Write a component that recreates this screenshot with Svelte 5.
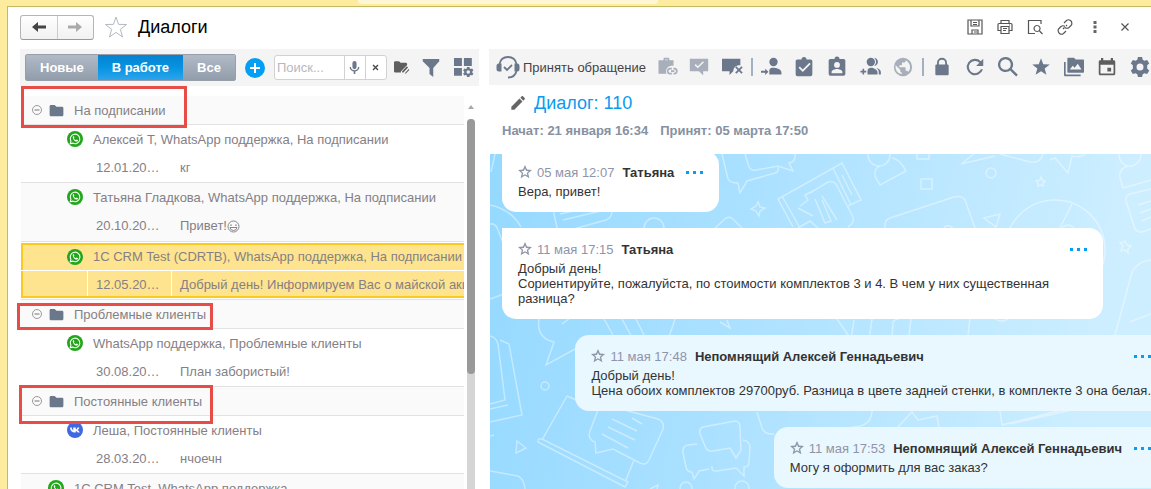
<script lang="ts">
  // filled shapes, 24x24 grid
  const icons: Record<string, string> = {
    caseLink:
      "M9 4V2.500C9 1.700 9.700 1 10.500 1h4c.8 0 1.500.7 1.500 1.500V4h5v6.500h-1c-4.500 0-7.500 2-8 6.500-.1 1.500.1 2.500.6 3H3V4h6zm2 0h3V3h-3v1zM17 13h2v2h-2c-2.600 0-2.600 4 0 4h2v2h-2c-5.400 0-5.400-8 0-8zm4 0h1c5.400 0 5.400 8 0 8h-1v-2h1c2.600 0 2.600-4 0-4h-1v-2zm-3 3h4v2h-4v-2z",
    bubbleCheck:
      "M1 2h22v15h-6v5l-5-5H1V2zm9.500 11.500l7.500-7.300L16.700 5l-6.200 6L8 8.500 6.700 9.800l3.800 3.700z",
    bubbleX:
      "M0 2h22v8c-5 0-8 2-8.500 7L9 21.500V17H0V2zm16 10.300l1.300-1.300 3 3 3-3 1.500 1.500-3 3 3 3-1.500 1.500-3-3-3 3-1.500-1.500 3-3-3-3z",
    personArrow:
      "M15 1a5 5 0 1 1 0 10 5 5 0 0 1 0-10zM10 21v-4.500c0-3 2.500-3.500 5-3.500s9 1.500 9.500 5v3H10zM0 16.500h5V14l4 3.800L5 21.500V19H0v-2.500z",
    clipboard:
      "M4 3h5a3 3 0 0 1 6 0h5c1 0 2 1 2 2v16c0 1-1 2-2 2H4c-1 0-2-1-2-2V5c0-1 1-2 2-2zm6.500 15L20 8.500 18.500 7l-8 8L7 11.500 5.500 13l5 5z",
    badge:
      "M4 2.500h5a3 3 0 0 1 6 0h5c1 0 2 1 2 2v16c0 1-1 2-2 2H4c-1 0-2-1-2-2v-16c0-1 1-2 2-2zM12 6a3.500 3.500 0 1 0 0 7 3.500 3.500 0 0 0 0-7zM5.500 19.500h13V18c0-2.500-4-3.700-6.500-3.700S5.500 15.500 5.500 18v1.500z",
    people:
      "M13 1a5 5 0 1 1 0 10 5 5 0 0 1 0-10zM17 1c6 1 6 9 0 10 3-3 3-7 0-10zM9 21v-4c0-3 2-4 4.500-4s7 2 7.500 5v3H9zM19 13c4 1 6 3 6 5v3h-2.500v-3c0-2-1.500-3.800-3.500-5zM3 14h2v2.500h2.500v2H5V21H3v-2.500H.5v-2H3V14z",
    globe:
      "M12 1a11 11 0 1 0 0 22 11 11 0 0 0 0-22zm-1.500 19.800A9 9 0 0 1 3.200 10l5.500 5.400v1c0 1.300.8 2.200 1.800 2.200v2.200zm7.700-2.700c-.3-.9-1.100-1.500-2.100-1.500h-1v-3.300c0-.6-.5-1.100-1.200-1.100H7.600V10h2.200c.6 0 1-.5 1-1.100V6.700H13c1.200 0 2.200-1 2.200-2.200V4a9 9 0 0 1 3 14.100z",
    lock: "M18.500 9H18V7a6 6 0 0 0-12 0v2h-.5C4.500 9 4 9.600 4 10.500v10c0 1 .5 1.500 1.500 1.500h13c1 0 1.500-.6 1.500-1.500v-10C20 9.600 19.500 9 18.500 9zM8.200 9V7a3.800 3.800 0 0 1 7.600 0v2H8.200z",
    refresh:
      "M19.800 4.200A11 11 0 1 0 22.600 15h-2.900a8.200 8.200 0 1 1-1.900-8.800L13.500 10.500H23V1l-3.200 3.200z",
    search:
      "M9 0a9 9 0 1 0 5.500 16.100l7.300 7.300 2-2-7.300-7.300A9 9 0 0 0 9 0zm0 2.700a6.300 6.300 0 1 1 0 12.600A6.300 6.300 0 0 1 9 2.700z",
    star: "M12 1.500l2.700 7.200 7.800.3-6.100 4.800 2.100 7.500L12 17l-6.500 4.300 2.100-7.500L1.500 9l7.800-.3L12 1.500z",
    media:
      "M0 6h2v15h18v2H1c-.6 0-1-.4-1-1V6zM6 1h6l2 2h9c.6 0 1 .4 1 1v14c0 .6-.4 1-1 1H5c-.6 0-1-.4-1-1V2c0-.6.400-1 1-1h1zm1 14h14l-4.500-7-3.700 5-2.300-2.500L7 15z",
    calendar:
      "M4 0h3v3h10V0h3v3h1c1.200 0 2 .8 2 2v16c0 1.200-.8 2-2 2H3c-1.200 0-2-.8-2-2V5c0-1.200.8-2 2-2h1V0zM3.300 9v11.700h17.400V9H3.300zM12.500 13h5v5h-5v-5z",
    gear: "M9.500 0h5l.7 3.300 2.200 1.200 3.200-1 2.500 4.200-2.500 2.300v3.900l2.500 2.300-2.500 4.300-3.200-1-2.200 1.200-.7 3.300h-5l-.7-3.300-2.200-1.200-3.200 1-2.500-4.300L3.400 14V10L.9 7.700l2.500-4.200 3.200 1 2.200-1.200L9.500 0zM12 7.800a4.200 4.200 0 1 0 0 8.400 4.200 4.200 0 0 0 0-8.400z",
    pencil: "M2 17.500V22h4.500L18.700 9.800l-4.500-4.500L2 17.500zM22 6.400c.6-.6.6-1.300 0-1.900L19.500 2c-.6-.6-1.300-.6-1.900 0l-2.100 2.100 4.500 4.400L22 6.400z",
    folder: "M1 5c0-1 1-2 2-2h6l3 3h9c1 0 2 1 2 2v11c0 1-1 2-2 2H3c-1 0-2-1-2-2V5z",
    folderEdit:
      "M0 4c0-1 .7-2 2-2h6l2.500 2.500H19c1 0 2 1 2 2V8L11 18.500V20H2c-1 0-2-1-2-2V4zM13 18l7.500-8 2 2-7.500 8h-2v-2zM17 21.500l6.500-7 1 1.300-5.500 5.700h-2z",
    funnel: "M1 0h22v3l-8 9v12l-5-4v-8L1 3V0z",
    mic: "M12 0a3.800 3.800 0 0 1 3.800 3.800v7.400a3.800 3.800 0 0 1-7.600 0V3.800A3.800 3.800 0 0 1 12 0zM3 11h2.500c0 8 13 8 13 0H21c0 4.500-3.300 7.700-7.500 8.400V24h-3v-4.600C6.300 18.700 3 15.500 3 11z",
    tiles:
      "M0 0h10v10H0V0zm12.500 0h10v10h-10V0zM0 12.500h10v10H0v-10zM16.500 11.500h3l.4 1.800 1.400.7 1.700-.7 1.500 2.500-1.400 1.200v1.500l1.400 1.200-1.500 2.500-1.700-.7-1.400.7-.4 1.800h-3l-.4-1.800-1.400-.7-1.700.7-1.500-2.500 1.400-1.200V17l-1.400-1.200 1.500-2.500 1.700.7 1.400-.7.400-1.800zM18 15.500a2.200 2.200 0 1 0 0 4.500 2.200 2.200 0 0 0 0-4.500z",
    starOutline:
      "M12 0l3.400 7.800 8.600.8-6.500 5.600 2 8.400-7.500-4.400-7.500 4.400 2-8.400L0 8.600l8.600-.8L12 0zm0 6l-1.900 4.200-4.600.5 3.500 3-1.100 4.500 4.100-2.400 4.100 2.400-1.100-4.500 3.500-3-4.600-.5L12 6z",
  };

  // thin line shapes, 16x16 grid
  const windowTools = [
    { label: "Сохранить", d: "M1 1h14v14H1zM4 1v6h8V1M6 3.500h4M6 5.500h4M5 15v-4h6v4M7 13h3" },
    { label: "Печать", d: "M4 4.500V1.500h8v3M3.500 11.500H1v-6q0-1 1-1h12q1 0 1 1v6h-2.500M4 7.500h8v7H4zM6 9.500h4M6 11.500h3M12 6h1" },
    { label: "Просмотр", d: "M8 14.500H1.500v-13H14V5M10 6.500a3 3 0 1 0 .1 0M12.500 12l3 3" },
    { label: "Ссылка", d: "M7 4l2.500-2.500q2-1.500 4 0t1 4.500L12 8.500q-2 1.500-4 0M9 12l-2.500 2.500q-2 1.500-4 0t-1-4.500L4 7.500q2-1.500 4 0M6 10l1.500-1.500M9 7l1-1" },
  ];

  const tools = [
    [
      { icon: "caseLink", label: "Связать со сделкой", off: true },
      { icon: "bubbleCheck", label: "Завершить", off: true },
      { icon: "bubbleX", label: "Отклонить" },
    ],
    [
      { icon: "personArrow", label: "Передать" },
      { icon: "clipboard", label: "Задача" },
      { icon: "badge", label: "Контакт" },
      { icon: "people", label: "Добавить участника" },
      { icon: "globe", label: "Сайт", off: true },
    ],
    [
      { icon: "lock", label: "Закрыть доступ" },
      { icon: "refresh", label: "Обновить", small: true },
      { icon: "search", label: "Найти" },
      { icon: "star", label: "Избранное" },
      { icon: "media", label: "Файлы" },
      { icon: "calendar", label: "Календарь", dark: true, small: true },
      { icon: "gear", label: "Настройки" },
    ],
  ];

  const groups = [
    {
      name: "На подписании",
      mark: "mark-a",
      items: [
        { net: "wa", who: "Алексей Т, WhatsApp поддержка, На подписании", date: "12.01.20…", text: "кг" },
        { net: "wa", who: "Татьяна Гладкова, WhatsApp поддержка, На подписании", date: "20.10.20…", text: "Привет!", smile: true, shade: true },
        { net: "wa", who: "1С CRM Test (CDRTB), WhatsApp поддержка, На подписании", date: "12.05.20…", text: "Добрый день! Информируем Вас о майской акции", selected: true },
      ],
    },
    {
      name: "Проблемные клиенты",
      mark: "mark-b",
      items: [
        { net: "wa", who: "WhatsApp поддержка, Проблемные клиенты", date: "30.08.20…", text: "План забористый!" },
      ],
    },
    {
      name: "Постоянные клиенты",
      mark: "mark-c",
      items: [
        { net: "vk", who: "Леша, Постоянные клиенты", date: "28.03.20…", text: "нчоечн" },
      ],
    },
  ];

  const messages = [
    { time: "05 мая 12:07", author: "Татьяна", lines: ["Вера, привет!"] },
    {
      time: "11 мая 17:15",
      author: "Татьяна",
      lines: [
        "Добрый день!",
        "Сориентируйте, пожалуйста, по стоимости комплектов 3 и 4. В чем у них существенная разница?",
      ],
    },
    {
      time: "11 мая 17:48",
      author: "Непомнящий Алексей Геннадьевич",
      own: true,
      lines: ["Добрый день!", "Цена обоих комплектов 29700руб. Разница в цвете задней стенки, в комплекте 3 она белая."],
    },
    { time: "11 мая 17:53", author: "Непомнящий Алексей Геннадьевич", own: true, lines: ["Могу я оформить для вас заказ?"] },
  ];

  const tabs = ["Новые", "В работе", "Все"];
  let activeTab = $state("В работе");
  let query = $state("");
</script>

{#snippet icon(name: string, size: number)}
  <svg width={size} height={size} viewBox="0 0 24 24" overflow="visible" aria-hidden="true">
    <path fill="currentColor" fill-rule="evenodd" d={icons[name]} />
  </svg>
{/snippet}

{#snippet network(name: string)}
  <svg width="16" height="16" viewBox="0 0 16 16" aria-hidden="true">
    {#if name === "wa"}
      <circle cx="8" cy="8" r="8" fill="#23a61c" />
      <path d="M3.200 12.800l.7-2.500a4.800 4.800 0 1 1 1.800 1.800z" fill="none" stroke="#fff" stroke-width="1.100" />
      <path d="M6.200 5.200c-1.400 1.200.8 5.200 3.500 5.400 1-.1 1.500-.8 1.300-1.300l-1.500-.8-.7.7c-.9-.3-1.600-1-1.900-1.900l.5-.6-.5-1.500z" fill="#fff" />
    {:else}
      <circle cx="8" cy="8" r="8" fill="#4068e0" />
      <path d="M3 5.500h1.700c.2 1.500.8 2.500 1.500 2.900V5.500h2.600v2c.9-.3 1.500-1.200 1.800-2h1.700c-.2 1-.9 2-1.700 2.600.9.5 1.700 1.300 2.100 2.500h-1.900c-.4-.8-1.100-1.400-2-1.600v1.600H8C5 10.600 3.200 8.800 3 5.500z" fill="#fff" />
    {/if}
  </svg>
{/snippet}

<div class="desk">
  <div class="top-strip"><span></span></div>
  <main>
    <header>
      <div class="history">
        <button aria-label="Назад">
          <svg width="16" height="12" viewBox="0 0 16 12"><path d="M7 1v3.500h8v3H7V11L1 6z" fill="#444" /></svg>
        </button>
        <button aria-label="Вперед">
          <svg width="16" height="12" viewBox="0 0 16 12"><path d="M9 1v3.500H1v3h8V11l6-5z" fill="#aaa" /></svg>
        </button>
      </div>
      <button class="plain fav" aria-label="В избранное">
        <svg width="24" height="24" viewBox="0 0 24 24">
          <path d="M12 2l2.600 7.400 8 .1-6.300 4.800 2.300 7.700L12 17.400 5.400 22l2.300-7.700L1.400 9.500l8-.1z" fill="none" stroke="#b4bac2" />
        </svg>
      </button>
      <h1>Диалоги</h1>
      <div class="window-tools">
        {#each windowTools as tool}
          <button class="plain" aria-label={tool.label}>
            <svg width="16" height="16" viewBox="0 0 16 16"><path d={tool.d} fill="none" stroke="#555" stroke-width="1.200" /></svg>
          </button>
        {/each}
        <button class="plain" aria-label="Еще">
          <svg width="16" height="16" viewBox="0 0 16 16"><path d="M6.500 2h3v3h-3zM6.500 6.500h3v3h-3zM6.500 11h3v3h-3z" fill="#666" /></svg>
        </button>
        <button class="plain" aria-label="Закрыть">
          <svg width="16" height="16" viewBox="0 0 16 16"><path d="M4.500 4.500l7 7M11.500 4.500l-7 7" stroke="#555" stroke-width="1.200" /></svg>
        </button>
      </div>
    </header>

    <div class="columns">
      <section class="list">
        <div class="bar">
          <div class="tabs">
            {#each tabs as tab}
              <button class:active={tab === activeTab} onclick={() => (activeTab = tab)}>{tab}</button>
            {/each}
          </div>
          <button class="plain add" aria-label="Добавить">
            <svg width="20" height="20" viewBox="0 0 20 20">
              <circle cx="10" cy="10" r="10" fill="#049ff2" />
              <path d="M10 5v10M5 10h10" stroke="#fff" stroke-width="2" />
            </svg>
          </button>
          <div class="search">
            <input type="text" placeholder="Поиск..." aria-label="Поиск" bind:value={query} />
            <button aria-label="Голосовой ввод">{@render icon("mic", 13)}</button>
            <button aria-label="Очистить" onclick={() => (query = "")}>
              <svg width="7" height="7" viewBox="0 0 7 7"><path d="M1 1l5 5M6 1L1 6" stroke="#444" stroke-width="1.300" /></svg>
            </button>
          </div>
          <div class="list-tools">
            <button class="plain dark" aria-label="Изменить папку">{@render icon("folderEdit", 15)}</button>
            <button class="plain" aria-label="Отбор">{@render icon("funnel", 18)}</button>
            <button class="plain" aria-label="Вид списка">{@render icon("tiles", 19)}</button>
          </div>
        </div>

        <div class="tree-wrap">
          <div class="tree">
            {#each groups as group}
              <div class="group">
                <button class="plain" aria-label="Свернуть">
                  <svg width="10" height="10" viewBox="0 0 10 10"><circle cx="5" cy="5" r="4.500" fill="none" stroke="#999" /><path d="M2.500 5h5" stroke="#777" /></svg>
                </button>
                {@render icon("folder", 15)}
                <span>{group.name}</span>
                <i class="mark {group.mark}"></i>
              </div>
              {#each group.items as item}
                <div class="item" class:selected={item.selected} class:shade={item.shade}>
                  <div class="who">{@render network(item.net)}<span>{item.who}</span></div>
                  <div class="last">
                    <span class="date">{item.date}</span>
                    <span class="text">
                      {item.text}{#if item.smile}<svg width="13" height="13" viewBox="0 0 13 13">
                          <circle cx="6.500" cy="6.500" r="5.500" fill="none" stroke="#888" />
                          <path d="M3 5.500q1-1.500 2 0M8 5.500q1-1.500 2 0M3 7.500h7q-.5 3-3.500 3T3 7.500z" fill="none" stroke="#888" />
                        </svg>{/if}
                    </span>
                  </div>
                </div>
              {/each}
            {/each}
            <div class="item root shade">
              <div class="who">{@render network("wa")}<span>1С CRM Test, WhatsApp поддержка</span></div>
            </div>
          </div>
          <div class="scroll">
            <svg width="6" height="4" viewBox="0 0 6 4"><path d="M3 0l3 4H0z" fill="#aaa" /></svg>
            <div class="track"><div class="thumb"></div></div>
          </div>
        </div>
      </section>

      <section class="dialog">
        <div class="bar">
          <button class="plain accept">
            <svg width="24" height="24" viewBox="0 0 24 24" fill="none" stroke="#6b788b" stroke-width="1.800">
              <path d="M3.500 9C4.500 4 8 2 12 2s7.500 2 8.500 7M20.500 16c-1 4.500-4 6.500-8.500 6.500" />
              <path d="M5.500 8.500v8H3q-2.500 0-2.500-2.500v-3q0-2.500 2.500-2.500zM18.500 8.500v8H21q2.500 0 2.500-2.500v-3q0-2.500-2.500-2.500z" fill="#6b788b" stroke="none" />
              <path d="M8 12l3 3 5-5" />
            </svg>
            Принять обращение
          </button>
          {#each tools as part, i}
            {#if i > 0}<span class="sep"></span>{/if}
            {#each part as tool}
              <button class="plain tool" class:off={tool.off} class:dark={tool.dark} aria-label={tool.label}>
                {@render icon(tool.icon, tool.small ? 18 : 20)}
              </button>
            {/each}
          {/each}
        </div>

        <div class="caption">
          {@render icon("pencil", 16)}
          <h2>Диалог: 110</h2>
        </div>
        <p class="dates"><span>Начат: 21 января 16:34</span><span>Принят: 05 марта 17:50</span></p>

        <div class="chat">
          <svg class="doodles" width="661" height="335" viewBox="0 0 661 335" aria-hidden="true">
            <g opacity=".42">
              <path d="M5 0L1 18M0 51Q22 56 31 73M0 70q6-1 8 6l14 36M0 145l14-5M63 55l4 19M122 57q0 7-6 9l-36 10M73 66l42-10M70 60l18-4M225 74l11-10q4-2 7 1l9 9M154 74a10 10 0 0 1 20 0" />
              <path d="M232 0l6 25q2 4 10 4l2 10 7-12 28-8q4-1 3-6M255 0l4 13q2 4 7 3l22-4 15 5-4-8q7-1 6-9M268 48l2 5 5 1-5 3-1 5-3-5-5-2 5-3z" />
              <path d="M303 73l-15-28 64-36 19 37-13 6M292 42l18 32M343 14l18 37M352 21l10 20M320 39l18-11q6-2 9 4l16 31q2 6-5 10M310 52l8-6-3-5 10-5M308 54l15 8M325 45l10 24 6-2-9-21M332 42l15 24M308 74l12-7 8 7" />
              <circle cx="389" cy="1" r="11" />
              <path d="M402 4q8 1 14 13l-26 14-5-9q-1-8 5-10M427 0v5h12V0M431 25h11v10h-11zM395 74q-1-8 5-10l64-21q8-2 11 3l10 28" />
              <circle cx="501" cy="19" r="5" />
              <path d="M484 0l-13 10 34-8M510 0l30 8q10 2 13-8M560 6l5-2 13 15 4-17q8 2 14-2M551 23l1 3 3 1-2 2v3l-2-1-3 1v-3l-2-2 4-1zM494 64l16-4-4 13z" />
              <circle cx="565" cy="96" r="50" />
              <path d="M582 50l-12 24M572 74q5-6 12 0M454 74q3-5 9 0" />
              <circle cx="640" cy="1" r="11" />
              <path d="M633 34l-3-10q-2-9 8-12M633 34l28-8M661 35l-21 5q-5 2-4 7l9 28q2 3 7 3l9-3M648 51l13-4M650 59l11-4M652 67l9-4M635 87l2 4 4 1-3 3v4l-3-3-4 1 2-5-3-3 4-1z" />
              <path d="M625 181l17-63q6-11 19-12M640 168l21-8M49 165q-3 19 15 23l-8 23 42-23M72 170l8-6M114 165l9 16M132 165l12 22M146 165l8 16M185 165l-6 18M230 168l10 6-3-8M347 165l14 20 3-19M382 165l-3 20M402 182l1-12q0-5 6-5M421 165l-2 16M480 165l-2 16M505 165q6 4 13 0" />
              <path d="M0 182q6 1 8 8l7 56-15 4M10 186l9 4 13 71-32 7M0 255l18-4M0 282l4-1M27 287l9 7-10 5zM0 317l28 5q6 3 7 13" />
              <circle cx="55" cy="232" r="4" />
              <path d="M77 242l-25 44M48 288l87 45 3-5-86-43q-5-1-4 3zM144 306l-8 20M77 242l23 10M108 256q8-5 19-2l41 11q7 3 5 10l-14 31q-3 6-9 3l-27-14-17 4-1-11q-8-3-5-11zM122 265l25 12M118 273l27 13M112 280l26 14M142 264l10 6" />
              <path d="M213 273l32-6q5 0 5 6l1 23-5 8-6-10-17 3q-6 1-8-5l-5-12q-1-6 3-7zM207 290l-9 1q-6 1-5 8l3 14q1 5 6 5l2 7 5-8 10-2M253 286q7 1 7 8l-1 14q0 5-5 5v9l-8-8-19 3q-6 1-5-5" />
              <circle cx="196" cy="334" r="6" />
              <circle cx="252" cy="334" r="7" />
              <path d="M160 335l8-4-1 4M267 258l5 16q3 7 12 6M382 256q0 13-12 16l-18 3M300 257l8-4M406 275l16-17 6 8 19-4 2 11M510 257l2 14 60-15M520 270l70-16" />
            </g>
          </svg>
          <div class="messages">
            {#each messages as message}
              <article class:own={message.own}>
                <div class="head">
                  <button class="plain" aria-label="Отметить">{@render icon("starOutline", 14)}</button>
                  <time>{message.time}</time>
                  <strong>{message.author}</strong>
                  <button class="plain more" aria-label="Действия"><i></i><i></i><i></i></button>
                </div>
                {#each message.lines as line}
                  <p>{line}</p>
                {/each}
              </article>
            {/each}
          </div>
        </div>
      </section>
    </div>
  </main>
</div>

<style>
  :global(body) {
    margin: 0;
  }

  .desk {
    height: 100vh;
    display: flex;
    flex-direction: column;
    overflow: hidden;
    background: #fdec9e;
    font: 13px "Liberation Sans", Arial, sans-serif;
    color: #333;
  }

  .desk * {
    box-sizing: border-box;
  }

  svg {
    display: block;
    flex: none;
  }

  h1,
  h2,
  p {
    margin: 0;
    font-weight: normal;
  }

  button {
    font: inherit;
    padding: 0;
    cursor: pointer;
  }

  .plain {
    display: flex;
    align-items: center;
    justify-content: center;
    flex: none;
    border: 0;
    background: none;
    color: #6b788b;
  }

  .top-strip {
    flex: none;
    height: 6px;
    padding-left: 358px;
  }

  .top-strip span {
    display: block;
    width: 300px;
    height: 4px;
    border-radius: 0 0 3px 3px;
    background: #fef7d6;
  }

  main {
    flex: 1;
    min-height: 0;
    display: flex;
    flex-direction: column;
    margin-left: 7px;
    border-top: 1px solid #c5b95f;
    border-left: 1px solid #c5b95f;
    background: #fff;
  }

  header {
    flex: none;
    display: flex;
    align-items: center;
    height: 42px;
    padding: 0 11px 2px 12px;
  }

  .history {
    display: flex;
    width: 74px;
    height: 25px;
    border: 1px solid #b5b5b5;
    border-bottom-color: #999;
    border-radius: 3px;
    background: linear-gradient(#fff, #f1f1f1);
  }

  .history button {
    flex: 1;
    display: flex;
    align-items: center;
    justify-content: center;
    border: 0;
    background: none;
  }

  .history button + button {
    border-left: 1px solid #ccc;
  }

  .fav {
    margin: 0 10px;
  }

  h1 {
    flex: 1;
    font-size: 18px;
    color: #000;
  }

  .window-tools {
    display: flex;
  }

  .window-tools button {
    width: 30px;
    height: 24px;
  }

  .columns {
    flex: 1;
    min-height: 0;
    display: flex;
    gap: 10px;
    padding-left: 12px;
  }

  .list {
    flex: 0 1 459px;
    display: flex;
    flex-direction: column;
    min-width: 0;
  }

  .dialog {
    flex: 1;
    display: flex;
    flex-direction: column;
    min-width: 0;
  }

  .bar {
    flex: none;
    display: flex;
    align-items: center;
    height: 36px;
    background: #f4f4f4;
  }

  .list .bar {
    height: 37px;
    padding: 0 6px 0 5px;
  }

  .tabs {
    display: flex;
    height: 27px;
    border: 1px solid #999fa8;
    border-radius: 2px;
  }

  .tabs button {
    border: 0;
    padding: 0 14px;
    background: linear-gradient(#b1bac7, #929dab);
    color: #fff;
    font-weight: bold;
  }

  .tabs .active {
    background: linear-gradient(#0583d0, #0593e2 50%, #2ea5ea);
  }

  .add {
    margin: 0 9px;
  }

  .search {
    display: flex;
    width: 113px;
    height: 25px;
    border: 1px solid #d2d2d2;
    border-radius: 3px;
    background: #fff;
  }

  .search input {
    flex: 1;
    min-width: 0;
    border: 0;
    padding: 0 2px;
    background: none;
    font: inherit;
  }

  .search input::placeholder {
    color: #bbb6c0;
  }

  .search button {
    width: 21px;
    display: flex;
    align-items: center;
    justify-content: center;
    border: 0;
    border-left: 1px solid #d2d2d2;
    background: none;
    color: #6b788b;
  }

  .list-tools {
    flex: 1;
    display: flex;
    justify-content: space-between;
    padding-left: 7px;
  }

  .dark {
    color: #5e5e5e;
  }

  .tree-wrap {
    flex: 1;
    min-height: 0;
    display: flex;
    padding: 10px 4px 0 1px;
  }

  .tree {
    flex: 1;
    min-width: 0;
    color: #858085;
  }

  .group {
    position: relative;
    display: flex;
    align-items: center;
    height: 29px;
    padding-left: 11px;
    border-bottom: 1px solid #e2e2e2;
    background: #fafafa;
  }

  .group > svg,
  .group > button {
    color: #6b788b;
    margin-right: 7px;
  }

  .group > svg {
    margin-right: 10px;
  }

  /* review frames over the folder rows */
  .mark {
    position: absolute;
    z-index: 1;
    border: 3px solid #e84c47;
  }

  .mark-a {
    left: 0;
    top: -10px;
    width: 166px;
    height: 42px;
  }

  .mark-b {
    left: -4px;
    top: 3px;
    width: 196px;
    height: 27px;
  }

  .mark-c {
    left: -2px;
    top: -2px;
    width: 194px;
    height: 39px;
  }

  .item {
    overflow: hidden;
    white-space: nowrap;
    border-bottom: 1px solid #e2e2e2;
  }

  .shade {
    background: #fafafa;
  }

  .who {
    display: flex;
    align-items: center;
    gap: 10px;
    height: 28px;
    padding-left: 46px;
  }

  .root .who {
    padding-left: 27px;
  }

  .last {
    display: flex;
    height: 29px;
    padding-left: 66px;
    line-height: 29px;
  }

  .shade .last {
    height: 30px;
    line-height: 30px;
  }

  .date {
    flex: none;
    width: 85px;
    padding-left: 9px;
  }

  .text {
    display: flex;
    align-items: flex-start;
    padding-left: 8px;
  }

  .text svg {
    align-self: center;
  }

  .selected {
    padding: 1px 0;
  }

  .selected .who {
    height: 27px;
    border: 2px solid #fcca1f;
    border-width: 2px 0 0 2px;
    padding: 0 0 2px 44px;
    background: #ffe48f;
  }

  .selected .last {
    height: 27px;
    border: 2px solid #fcca1f;
    border-width: 0 0 2px 2px;
    margin-top: 1px;
    padding-left: 64px;
    line-height: 28px;
    background: #ffe48f;
  }

  .selected .date {
    border: 1px solid #fff;
    border-width: 0 1px;
    padding-left: 8px;
  }

  .scroll {
    flex: none;
    display: flex;
    flex-direction: column;
    align-items: center;
    width: 9px;
    margin-left: 2px;
    padding-top: 9px;
  }

  .track {
    flex: 1;
    width: 8px;
    margin-top: 10px;
    border-radius: 4px 4px 0 0;
    background: #d5d5d5;
  }

  .thumb {
    height: 69%;
    border-radius: 4px;
    background: #999;
  }

  .accept {
    gap: 3px;
    padding: 0 4px 0 7px;
    color: #444;
  }

  .tool {
    width: 33px;
    height: 30px;
  }

  .off {
    opacity: 0.55;
  }

  .sep {
    flex: none;
    width: 2px;
    height: 18px;
    margin: 0 2px;
    background: #a3b0c0;
  }

  .caption {
    display: flex;
    align-items: center;
    gap: 8px;
    height: 36px;
    padding-left: 21px;
    color: #666;
  }

  h2 {
    font-size: 18px;
    color: #0a9bee;
  }

  .dates {
    display: flex;
    gap: 12px;
    height: 33px;
    padding: 2px 0 0 13px;
    line-height: 15px;
    font-weight: bold;
    color: #8791a1;
  }

  .chat {
    position: relative;
    flex: 1;
    min-height: 0;
    margin-left: 1px;
    overflow: hidden;
    background: linear-gradient(100deg, #95d9ff, #a9e0ff 35%, #cdeeff 90%);
  }

  .doodles {
    position: absolute;
    top: 0;
    left: 0;
    fill: none;
    stroke: #fff;
    stroke-width: 1.5;
  }

  /* the feed is a little wider than the pane, as when scrolled sideways */
  .messages {
    position: relative;
    display: flex;
    flex-direction: column;
    align-items: flex-start;
    gap: 16px;
    margin: -3px -16px 0 0;
    padding-left: 12px;
  }

  article {
    max-width: calc(100% - 64px);
    padding: 11px 16px 13px;
    border-radius: 0 14px 14px 14px;
    background: #fff;
    line-height: 15px;
  }

  .own {
    align-self: flex-end;
    border-radius: 14px 0 14px 14px;
    background: #e9f7ff;
  }

  .head {
    display: flex;
    align-items: center;
    height: 20px;
    margin-bottom: 2px;
    white-space: nowrap;
  }

  .head button {
    color: #8d97a8;
  }

  time {
    margin: 0 8px 0 5px;
    color: #8f94aa;
  }

  .head .more {
    gap: 4px;
    margin-left: auto;
    padding-left: 12px;
  }

  .more i {
    width: 3px;
    height: 3px;
    background: #049ff2;
  }
</style>
